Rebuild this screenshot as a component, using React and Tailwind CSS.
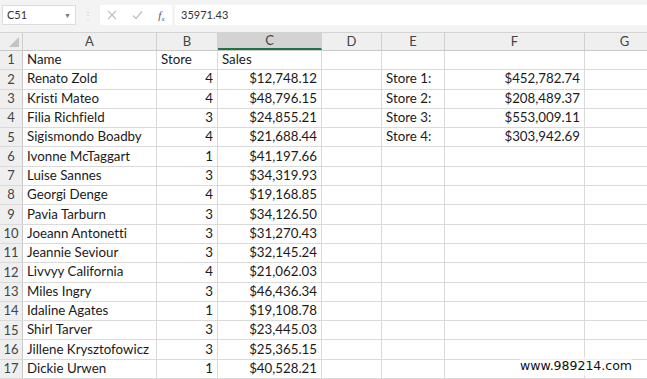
import React from 'react';

const cols = [
  { key: 'A', w: 'w-[134px]' },
  { key: 'B', w: 'w-[61px]' },
  { key: 'C', w: 'w-[104px]' },
  { key: 'D', w: 'w-[60px]' },
  { key: 'E', w: 'w-[63px]' },
  { key: 'F', w: 'w-[140px]' },
  { key: 'G', w: 'w-[80px]' },
];

const data = [
  ['Renato Zold', 4, '$12,748.12'],
  ['Kristi Mateo', 4, '$48,796.15'],
  ['Filia Richfield', 3, '$24,855.21'],
  ['Sigismondo Boadby', 4, '$21,688.44'],
  ['Ivonne McTaggart', 1, '$41,197.66'],
  ['Luise Sannes', 3, '$34,319.93'],
  ['Georgi Denge', 4, '$19,168.85'],
  ['Pavia Tarburn', 3, '$34,126.50'],
  ['Joeann Antonetti', 3, '$31,270.43'],
  ['Jeannie Seviour', 3, '$32,145.24'],
  ['Livvyy California', 4, '$21,062.03'],
  ['Miles Ingry', 3, '$46,436.34'],
  ['Idaline Agates', 1, '$19,108.78'],
  ['Shirl Tarver', 3, '$23,445.03'],
  ['Jillene Krysztofowicz', 3, '$25,365.15'],
  ['Dickie Urwen', 1, '$40,528.21'],
];

const totals = [
  ['Store 1:', '$452,782.74'],
  ['Store 2:', '$208,489.37'],
  ['Store 3:', '$553,009.11'],
  ['Store 4:', '$303,942.69'],
];

function Cell({ w, children, right }) {
  return (
    <div
      className={`${w} shrink-0 h-full border-r border-[#dadada] px-[4px] flex items-center whitespace-nowrap overflow-hidden ${right ? 'justify-end' : ''}`}
    >
      {children}
    </div>
  );
}

export default function App() {
  const rows = [['Name', 'Store', 'Sales', '', '', '', '']];
  data.forEach((d, i) => {
    const t = totals[i];
    rows.push([d[0], d[1], d[2], '', t ? t[0] : '', t ? t[1] : '', '']);
  });

  return (
    <div
      className="w-[647px] h-[379px] overflow-hidden bg-white relative [font-variant-ligatures:none]"
      style={{ fontFamily: "Lato, 'Open Sans', sans-serif" }}
    >
      {/* Formula bar */}
      <div className="h-[33px] bg-[#f3f3f3] flex items-start pt-[5px] pl-[2px] border-b border-[#d4d4d4]">
        <div className="w-[74px] h-[20px] bg-white border border-[#dcdcdc] flex items-center justify-between px-[4px] text-[11px] text-[#333]">
          <span>C51</span>
          <span className="text-[7px] text-[#777]">▼</span>
        </div>
        <div className="w-[24px] flex justify-center text-[#c8c8c8] text-[10px] leading-[20px]">⋮</div>
        <div className="w-[72px] h-[20px] bg-white flex items-center justify-around text-[#bcbcbc]">
          <svg width="10" height="10" viewBox="0 0 10 10" stroke="#c0c0c0" strokeWidth="1.2"><path d="M1 1L9 9M9 1L1 9" /></svg>
          <svg width="11" height="10" viewBox="0 0 11 10" stroke="#c0c0c0" strokeWidth="1.2" fill="none"><path d="M1 5.5L4 8.5L10 1.5" /></svg>
          <span className="italic text-[11px] text-[#555]" style={{ fontFamily: "'Liberation Serif', serif" }}>f<sub className="text-[7px]">x</sub></span>
        </div>
        <div className="ml-[3px] flex-1 h-[20px] bg-white flex items-center px-[6px] text-[11px] text-[#333]">
          35971.43
        </div>
      </div>

      {/* Column headers */}
      <div className="h-[18px] flex bg-[#efefef] border-b border-[#c8c8c8] text-[13px] text-[#444]">
        <div className="w-[23px] shrink-0 border-r border-[#d0d0d0] relative">
          <svg className="absolute right-[3px] bottom-[3px]" width="10" height="10" viewBox="0 0 10 10"><path d="M10 0L10 10L0 10Z" fill="#c4c4c4" /></svg>
        </div>
        {cols.map((c) => (
          <div
            key={c.key}
            className={`${c.w} shrink-0 border-r border-[#d0d0d0] flex items-center justify-center ${c.key === 'C' ? 'bg-[#d3d3d3] border-b-2 border-b-[#217346]' : ''}`}
          >
            {c.key}
          </div>
        ))}
      </div>

      {/* Rows */}
      {rows.map((r, i) => (
        <div key={i} className="h-[19.3px] flex border-b border-[#dadada] text-[13.3px] text-[#1a1a1a]">
          <div className="w-[23px] shrink-0 bg-[#efefef] border-r border-[#c8c8c8] flex items-center justify-center text-[13px] text-[#444]">
            {i + 1}
          </div>
          <Cell w={cols[0].w}>{r[0]}</Cell>
          <Cell w={cols[1].w} right={i > 0}>{r[1]}</Cell>
          <Cell w={cols[2].w} right={i > 0}>{r[2]}</Cell>
          <Cell w={cols[3].w}>{r[3]}</Cell>
          <Cell w={cols[4].w}>{r[4]}</Cell>
          <Cell w={cols[5].w} right>{r[5]}</Cell>
          <Cell w={cols[6].w}>{r[6]}</Cell>
        </div>
      ))}

      <div
        className="absolute right-[15px] bottom-[3px] text-[12.5px] text-[#111] bg-white/60"
        style={{ fontFamily: "'DejaVu Sans', sans-serif" }}
      >
        www.989214.com
      </div>
    </div>
  );
}
